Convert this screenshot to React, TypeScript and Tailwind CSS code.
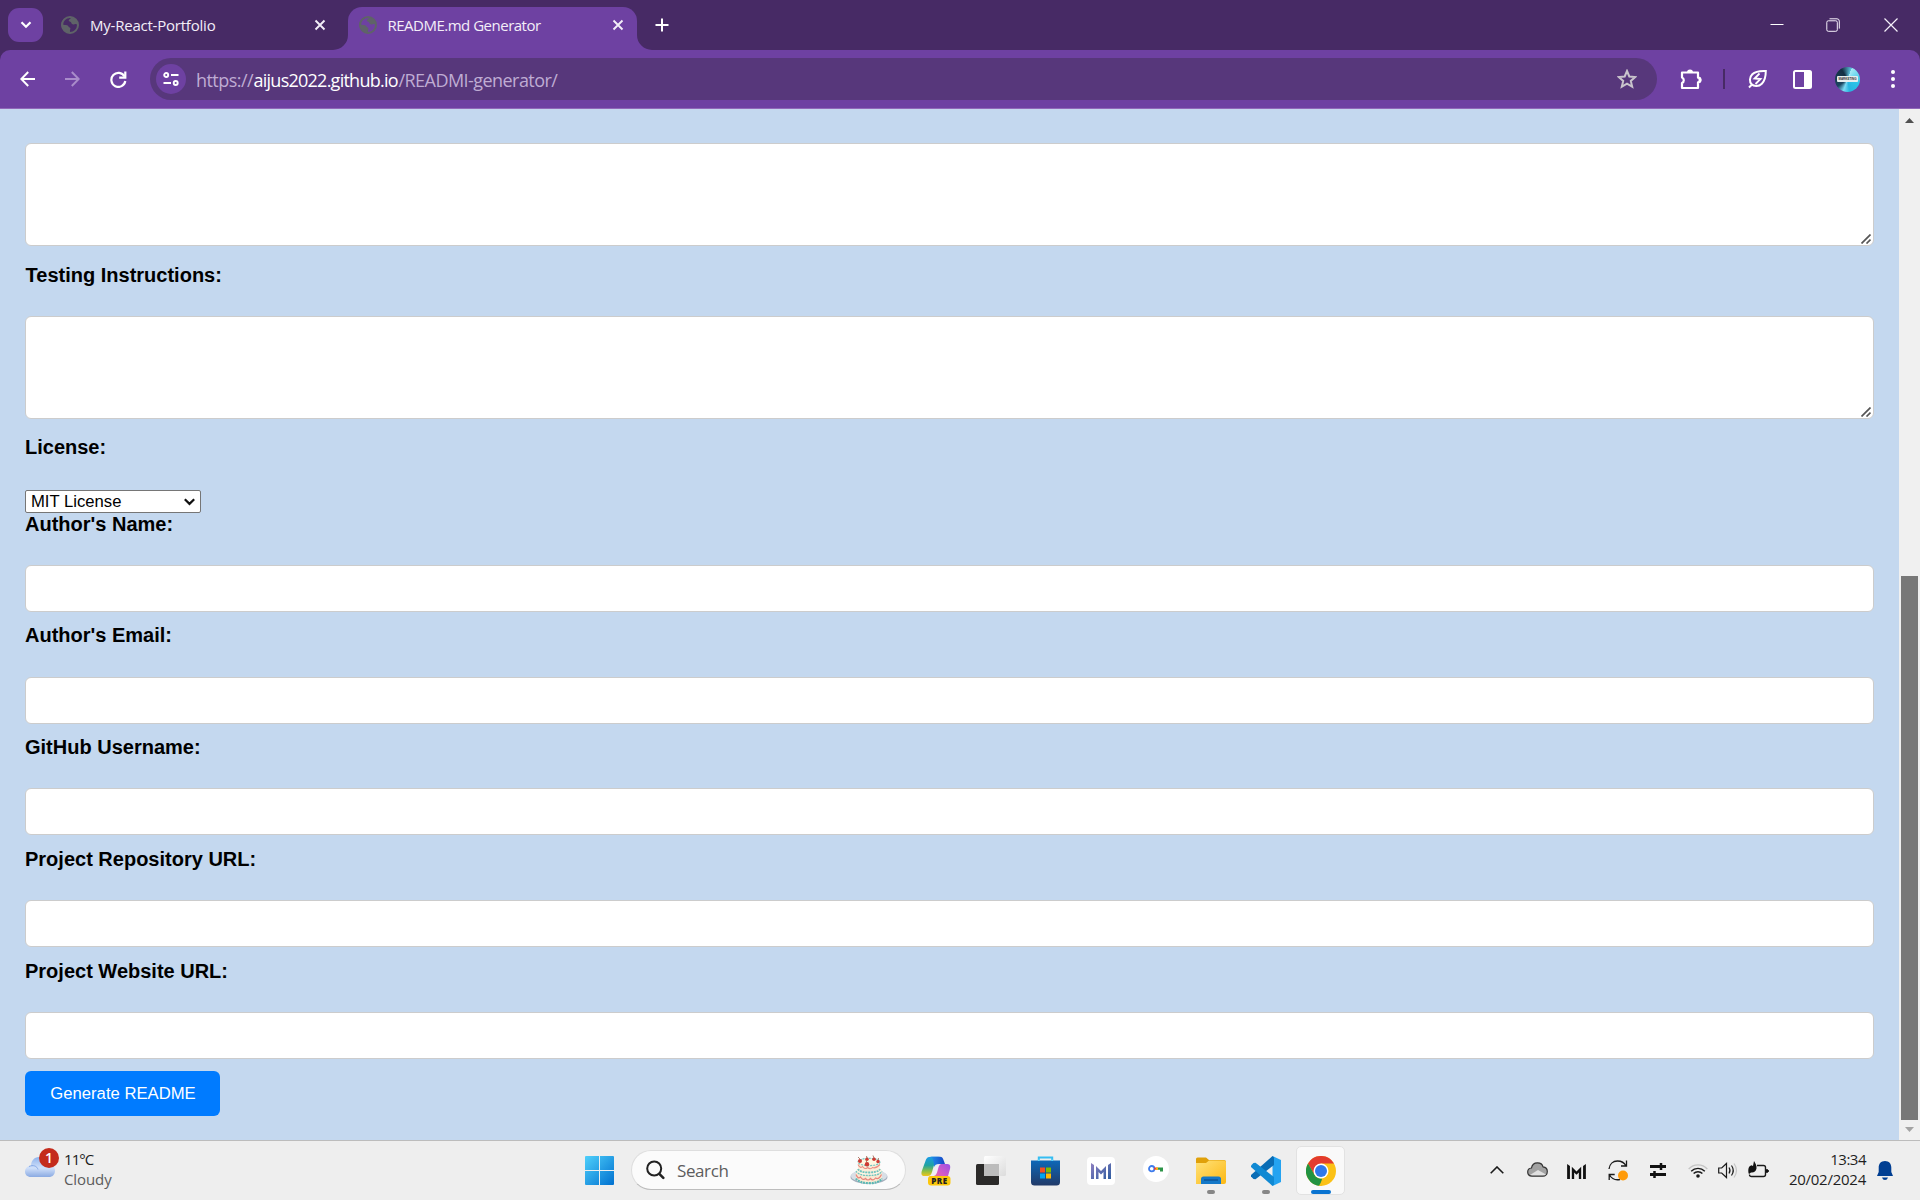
import React from "react";

const UI = "font-['Open_Sans',sans-serif]";

function Globe() {
  return (
    <svg width="18" height="18" viewBox="0 0 18 18" className="shrink-0">
      <circle cx="9" cy="9" r="8" fill="none" stroke="#5f6368" strokeWidth="2" />
      <path d="M8.500 1C6 1 2 3.500 1.500 8c1.500 1.300 3 .8 4.500 1.200 1.800.4 1.300 2 2.800 2.400 1 .3.600 1.700.200 2.600-.3 1 .2 2.200.8 2.800C4 17 .5 13 .5 9 .5 4 4 1 8.500 1z" fill="#5f6368" />
      <path d="M10.500 1.500c-.6 1.400-2.800 1.500-2.800 3.100 0 1.500 2.300.7 2.600 2.100.3 1.500 1.700 2 3.200 1.500 1.400-.5 2.800.2 3.500 1.300C17.500 5 14.500 2 10.500 1.500z" fill="#5f6368" />
    </svg>
  );
}

function Cross() {
  return (
    <svg width="12" height="12" viewBox="0 0 12 12" className="shrink-0" stroke="#f3eef8" strokeWidth="1.900">
      <path d="M1.500 1.500l9 9M10.500 1.500l-9 9" />
    </svg>
  );
}

function TabStrip() {
  return (
    <div className="flex h-[50px] w-full items-start bg-[#472a65]">
      <div className="ml-2 mt-2 flex h-[34px] w-[35px] items-center justify-center rounded-[11px] bg-[#6e41a2]">
        <svg width="12" height="8" viewBox="0 0 12 8" fill="none" stroke="#fff" strokeWidth="2.200"><path d="M1.500 1.200L6 5.700l4.500-4.500" /></svg>
      </div>
      <div className="ml-[18px] flex h-[50px] w-[287px] items-center">
        <Globe />
        <span className="ml-[11px] w-[213px] whitespace-nowrap text-[15px] tracking-[-0.22px] text-[#f3eef8]">My-React-Portfolio</span>
        <div className="ml-[11px] flex"><Cross /></div>
      </div>
      <div className="relative mt-[7px] flex h-[43px] w-[289px] items-center rounded-t-[14px] bg-[#6e41a2] pb-[7px] pl-[11px]">
        <svg width="15" height="15" viewBox="0 0 15 15" className="absolute -left-[15px] bottom-0"><path d="M15 0v15H0A15 15 0 0 0 15 0z" fill="#6e41a2" /></svg>
        <svg width="15" height="15" viewBox="0 0 15 15" className="absolute -right-[15px] bottom-0"><path d="M0 0v15h15A15 15 0 0 1 0 0z" fill="#6e41a2" /></svg>
        <Globe />
        <span className="ml-[10.500px] w-[213px] whitespace-nowrap text-[15px] tracking-[-0.5px] text-[#f3eef8]">README.md Generator</span>
        <div className="ml-[11px] flex"><Cross /></div>
      </div>
      <svg width="14" height="14" viewBox="0 0 14 14" className="ml-[18px] mt-[18px]" stroke="#fff" strokeWidth="2"><path d="M7 .5v13M.5 7h13" /></svg>
      <div className="ml-auto mr-[22px] mt-[17px] flex h-4 items-center">
        <svg width="14" height="14" viewBox="0 0 14 14"><path d="M.5 6.500h13" stroke="#fff" strokeWidth="1" /></svg>
        <svg width="14" height="14" viewBox="0 0 14 14" className="ml-[42px]" fill="none" stroke="#f5f0fa"><rect x=".8" y="2.800" width="10.500" height="10.500" rx="1.500" /><path d="M3.500.8h7.500a2.300 2.300 0 0 1 2.300 2.300v7.500" /></svg>
        <svg width="14" height="14" viewBox="0 0 14 14" className="ml-[44px]" stroke="#f5f0fa" strokeWidth="1.200"><path d="M.5.5l13 13M13.500.5l-13 13" /></svg>
      </div>
    </div>
  );
}

function Toolbar() {
  return (
    <div className="h-[59px] w-full bg-[#472a65]">
      <div className="flex h-[59px] items-center rounded-t-[10px] border-b border-[#9068b8] bg-[#6e41a2]">
        <svg width="16" height="16" viewBox="0 0 16 16" className="ml-5 shrink-0" fill="none" stroke="#fff" strokeWidth="2"><path d="M15 8H2M8.200 1L1.300 8l6.900 7" /></svg>
        <svg width="16" height="16" viewBox="0 0 16 16" className="ml-[28px] shrink-0" fill="none" stroke="#a98cca" strokeWidth="2"><path d="M1 8h13M7.800 1l6.900 7-6.900 7" /></svg>
        <svg width="17" height="17" viewBox="0 0 17 17" className="ml-[30px] shrink-0" fill="none" stroke="#fff" strokeWidth="2.200"><path d="M14.500 5.500A7 7 0 1 0 15.300 10" /><path d="M15.300.5v6.200H9.200" /></svg>
        <div className="ml-[23px] flex h-[42px] w-[1507px] shrink-0 items-center rounded-full bg-[#57377b]">
          <div className="ml-[6px] flex h-[30px] w-[30px] items-center justify-center rounded-full bg-[#6e41a2]">
            <svg width="16" height="14" viewBox="0 0 16 14" fill="none" stroke="#fff" strokeWidth="1.900"><circle cx="3.200" cy="3" r="2" /><path d="M8 3h7.500M.5 11h7.500" /><circle cx="12.700" cy="11" r="2" /></svg>
          </div>
          <div className="ml-[10px] mt-[1px] flex whitespace-nowrap text-[18px] leading-6 text-[#bfacd3]">
            <span className="w-[57.5px] tracking-[-0.55px]">https://</span>
            <span className="w-[145px] tracking-[-0.75px] text-white">aijus2022.github.io</span>
            <span className="tracking-[-0.55px]">/READMI-generator/</span>
          </div>
          <svg width="20" height="20" viewBox="0 0 20 20" className="ml-auto mr-5" fill="none" stroke="#c9c4cc" strokeWidth="2"><path d="M10 2l2.300 5.500 6 .5-4.500 3.900 1.400 5.900L10 14.700l-5.200 3.100 1.400-5.900L1.700 8l6-.5z" /></svg>
        </div>
        <svg width="22" height="22" viewBox="0 0 22 22" className="ml-[23px] shrink-0"><path d="M2 4.500h16v5.200a2.300 2.300 0 0 1 0 4.600v5.700H2v-5a3 3 0 0 0 0-5.500z" fill="none" stroke="#fff" strokeWidth="2.200" strokeLinejoin="round" /><path d="M7 4.500a3 3 0 0 1 6 0zM18.500 9a3 3 0 0 1 0 6z" fill="#fff" /></svg>
        <div className="ml-[21px] h-5 w-[2px] bg-[#472a65]" />
        <svg width="20" height="20" viewBox="0 0 20 20" className="ml-[23px] shrink-0" fill="none" stroke="#fff" strokeWidth="2"><path d="M17.800 2c-6-.3-10.500.3-13.500 3.300-3 3-3 7.500-.7 10s7.200 2.500 10.200-.5c3-3 4-7 4-12.800zM4 15.500l-3 3" /><path d="M11.500 4.500l-5 5 6 .5-5 5" strokeWidth="1.800" /></svg>
        <svg width="19" height="19" viewBox="0 0 19 19" className="ml-[25px] shrink-0"><rect x="1" y="1" width="17" height="17" rx="1.500" fill="none" stroke="#fff" strokeWidth="2" /><path d="M11 1h7v17h-7z" fill="#fff" /></svg>
        <div className="ml-[23px] flex h-[25px] w-[25px] shrink-0 items-center justify-center overflow-hidden rounded-full bg-[conic-gradient(from_20deg,#a5e9f5,#2cc3e8_90deg,#27b5e0_150deg,#7bdcf5_180deg,#1b4560_215deg,#142f42_310deg,#5cc5e0)]">
          <div className="flex h-[6px] w-[21px] items-center justify-center rounded-[1px] bg-[#e6eeee] font-['Liberation_Sans',sans-serif] text-[3px] font-bold leading-none text-[#333]">MARKETING</div>
        </div>
        <svg width="4" height="18" viewBox="0 0 4 18" className="ml-[31px] shrink-0" fill="#fff"><circle cx="2" cy="2" r="2" /><circle cx="2" cy="9" r="2" /><circle cx="2" cy="16" r="2" /></svg>
      </div>
    </div>
  );
}

function Area() {
  return (
    <div className="relative h-[103px] w-[1849px] rounded-[6px] border border-[#ccc] bg-white">
      <svg width="10" height="10" viewBox="0 0 10 10" className="absolute bottom-[1px] right-[2px]" stroke="#555" strokeWidth="1.700"><path d="M.5 9.500l9-9M5.500 9.500l4-4" /></svg>
    </div>
  );
}

function Label({ className, children }: { className: string; children: string }) {
  return <div className={"h-[23px] whitespace-nowrap text-[20px] font-bold leading-[23px] text-black " + className}>{children}</div>;
}

function Box() {
  return <div className="h-[47px] w-[1849px] rounded-[6px] border border-[#ccc] bg-white" />;
}

function Form() {
  return (
    <div className="flex h-[1031px] w-full bg-[#c4d8ef]">
      <div className="flex w-[1899px] flex-col items-start pl-[25px] pt-[34px] font-['Liberation_Sans',Arial,sans-serif]">
        <Area />
        <Label className="mb-[29px] mt-[18px] pl-[0.6px]">Testing Instructions:</Label>
        <Area />
        <Label className="mb-[31px] mt-[17px]">License:</Label>
        <div className="flex h-[23px] w-[176px] items-center justify-between rounded-[2px] border border-[#767676] bg-white pl-[5px] pr-[5px] text-[16.667px] leading-[21px] text-black">
          <span>MIT License</span>
          <svg width="11" height="8" viewBox="0 0 11 8" fill="none" stroke="#111" strokeWidth="2.200"><path d="M.8 1.200l4.700 4.700 4.700-4.700" /></svg>
        </div>
        <Label className="mb-[29px]">Author's Name:</Label>
        <Box />
        <Label className="mb-[30px] mt-[12px]">Author's Email:</Label>
        <Box />
        <Label className="mb-[29px] mt-[12px]">GitHub Username:</Label>
        <Box />
        <Label className="mb-[29px] mt-[13px]">Project Repository URL:</Label>
        <Box />
        <Label className="mb-[29px] mt-[13px]">Project Website URL:</Label>
        <Box />
        <div className="mt-[12px] flex h-[45px] w-[195px] items-center justify-center whitespace-nowrap rounded-[6px] bg-[#007bff] pl-[1px] text-[16.667px] text-white">Generate README</div>
      </div>
      <div className="flex w-[21px] flex-col items-center bg-[#f0f0f0] pt-[9px]">
        <svg width="9" height="5" viewBox="0 0 9 5"><path d="M4.500 0L9 5H0z" fill="#505050" /></svg>
        <div className="mt-[453px] h-[544px] w-[17px] bg-[#787878]" />
        <svg width="9" height="5" viewBox="0 0 9 5" className="mt-[7px]"><path d="M0 0h9L4.500 5z" fill="#a3a3a3" /></svg>
      </div>
    </div>
  );
}

function Slot({ children, mark }: { children: React.ReactNode; mark?: boolean }) {
  return (
    <div className="relative flex h-[59px] w-[55px] shrink-0 items-center justify-center">
      {children}
      {mark && <div className="absolute bottom-[6px] h-1 w-2 rounded-full bg-[#868686]" />}
    </div>
  );
}

function Cake() {
  return (
    <svg width="38" height="31" viewBox="0 0 38 31">
      <ellipse cx="19" cy="22" rx="18.500" ry="7" fill="#a5afbd" />
      <ellipse cx="19" cy="21" rx="18" ry="6.500" fill="#d9dfe6" />
      <path d="M6 16v7c0 3 6 5.500 13 5.500S32 26 32 23v-7z" fill="#f8ead3" />
      <ellipse cx="19" cy="16" rx="13" ry="4.500" fill="#fff5e3" />
      <path d="M6 23.500c2 3 7 4.700 13 4.700s11-1.700 13-4.700" fill="none" stroke="#58b8b5" strokeWidth="2.200" strokeDasharray="2 .8" />
      <path d="M6 16c1.500 3 6 4.500 13 4.500S30.500 19 32 16" fill="none" stroke="#6fc4bf" strokeWidth="1.300" strokeDasharray="2 .8" />
      <path d="M6 19.500q2 5 4.500 2.500 2.500 4 5 1.500 2.500 3 5 0 2.500 3 5-.5 3.500 2 6-3.500" fill="none" stroke="#e9847b" strokeWidth="1.200" />
      <path d="M8 7v7c0 2.500 5 4 11 4s11-1.500 11-4V7z" fill="#fbeed9" />
      <path d="M8 14c1 2.500 6 3.500 11 3.500S29 16.500 30 14" fill="none" stroke="#6fc4bf" strokeWidth="1.800" strokeDasharray="2 .8" />
      <path d="M8 9.500q2.500 4.500 4.500 2 2.500 3.500 5 1 3 2.500 5 0 3 1.500 7.500-3" fill="none" stroke="#eb8f83" strokeWidth="1.100" />
      <ellipse cx="19" cy="7" rx="11" ry="3.600" fill="#fff6e0" stroke="#6fc4bf" strokeWidth="1.200" strokeDasharray="2 1" />
      <g fill="#cf3a33"><circle cx="10" cy="6" r="2" /><circle cx="17" cy="4.200" r="1.700" /><circle cx="24" cy="4.200" r="1.800" /><circle cx="28" cy="6.500" r="1.700" /><circle cx="17" cy="9.300" r="2.200" /></g>
      <path d="M10 4L8 2M17 3l-.5-2M24 3l-1-2.500M28 5l.5-2M17 7.500l-1-2" stroke="#8c4a2f" strokeWidth=".7" />
    </svg>
  );
}

function Copilot() {
  return (
    <svg width="30" height="30" viewBox="0 0 30 30">
      <defs>
        <linearGradient id="ca" x1="0" y1="0" x2="0" y2="1"><stop offset="0" stopColor="#1a9be8" /><stop offset=".45" stopColor="#21a3a0" /><stop offset=".75" stopColor="#8fc043" /><stop offset="1" stopColor="#f0c419" /></linearGradient>
        <linearGradient id="cb" x1="1" y1="0" x2="0" y2="1"><stop offset="0" stopColor="#9a4fe6" /><stop offset=".5" stopColor="#d65bc4" /><stop offset="1" stopColor="#fb7f5c" /></linearGradient>
        <linearGradient id="cc" x1="0" y1="0" x2="1" y2="0"><stop offset="0" stopColor="#1f8ee8" /><stop offset="1" stopColor="#1644c6" /></linearGradient>
      </defs>
      <path d="M5 3.500C6 1.500 7.500.8 10 .8h9c-3 0-4 2-5 5L11 16c-1 3-2 4-4.500 4H3.500C.5 20 0 18 .8 15z" fill="url(#ca)" />
      <path d="M10 .8h9c2.300 0 3 1.500 3.700 3.700L24 8h-6c-3 0-4 1-5 3 0-4-1-9-3-10.200z" fill="url(#cc)" />
      <path d="M18 8h8.500c3 0 3 3 2.500 5l-2 7c-1 3-2 5-5 5h-9c-3 0-4-2-4.500-5 3 1 5 0 6-4l2-6z" fill="url(#cb)" />
      <path d="M18.500 8C14 8 14 19 9 20h3.500c5 0 3.500-11 7.500-12z" fill="#f2edf5" />
      <rect x="7" y="20" width="22.500" height="9.500" rx="3" fill="#fdc70a" />
      <text x="18.500" y="27.700" textAnchor="middle" fontFamily="Open Sans, sans-serif" fontWeight="800" fontSize="8" letterSpacing=".6" fill="#222">PRE</text>
    </svg>
  );
}

const M_SHAPE = "M0 0l3 2v14H0zM5 3l5 5 5-5v13h-2.500V9L10 11.500 7.500 9v7H5zM20 0v16h-3V2z";

function Taskbar() {
  return (
    <div className={"flex h-[60px] w-full border-t border-[#bcbcbc] bg-[#eeeeee] " + UI}>
      <div className="flex w-[585px]">
        <div className="relative ml-[25px] mt-[6px] h-[32px] w-[35px]">
          <svg width="30" height="20" viewBox="0 0 30 20" className="absolute left-0 top-[10px]">
            <defs><linearGradient id="cl" x1="0" y1="0" x2="0" y2="1"><stop offset="0" stopColor="#8fb3ec" /><stop offset=".55" stopColor="#d0e0fa" /><stop offset="1" stopColor="#8aaae2" /></linearGradient></defs>
            <path d="M6 9C6 4 9 0 14 0c5 0 8 3 8.500 7C27 7 30 9 30 13.500S27 20 24 20H6c-4 0-6-2.500-6-5.500S2 9 6 9z" fill="url(#cl)" />
            <path d="M4 9.500c4-2 8-.5 9 3" fill="none" stroke="#86a9e6" strokeWidth="1" />
          </svg>
          <div className="absolute left-[14px] top-[1px] flex h-[20px] w-[20px] items-center justify-center rounded-full bg-[#c42b1c] text-[14px] font-semibold leading-none text-white">1</div>
        </div>
        <div className="ml-[4px] mt-[8px] whitespace-nowrap text-[15px] leading-5">
          <div className="tracking-[-0.95px] text-[#1c1c1c]">11°C</div>
          <div className="tracking-[-0.1px] text-[#5c5c5c]">Cloudy</div>
        </div>
      </div>
      <svg width="29" height="29" viewBox="0 0 29 29" className="mt-[15px] shrink-0">
        <defs><linearGradient id="wn" x1="0" y1="0" x2="1" y2="1"><stop offset="0" stopColor="#4fd0fb" /><stop offset="1" stopColor="#0070cf" /></linearGradient></defs>
        <path d="M0 1q0-1 1-1h13v14H0zM15 0h13q1 0 1 1v13H15zM0 15h14v14H1q-1 0-1-1zM15 15h14v13q0 1-1 1H15z" fill="url(#wn)" />
      </svg>
      <div className="ml-[17px] mt-[9px] flex h-[40px] w-[275px] shrink-0 items-center rounded-full border border-[#dedede] border-b-[#bdbdbd] bg-[#fbfbfb]">
        <svg width="19" height="20" viewBox="0 0 19 20" className="ml-[14px]" fill="none" stroke="#222" strokeLinecap="round"><circle cx="8.200" cy="8.500" r="7" strokeWidth="2" /><path d="M13.300 13.800l4 4" strokeWidth="2.600" /></svg>
        <span className="ml-[12px] pt-[1px] text-[17px] tracking-[-0.4px] text-[#5d5d5d]">Search</span>
        <div className="ml-auto mr-[17px]"><Cake /></div>
      </div>
      <div className="ml-[2px] flex">
        <Slot><Copilot /></Slot>
        <Slot>
          <svg width="30" height="30" viewBox="0 0 30 30"><defs><linearGradient id="tv" x1="0" y1="0" x2="1" y2="1"><stop offset="0" stopColor="#fff" /><stop offset="1" stopColor="#dcdcdc" /></linearGradient></defs><rect x="0" y="8" width="23" height="21" rx="1.500" fill="#2b2a29" /><rect x="8" y="0" width="22" height="20" rx="1.500" fill="url(#tv)" /><path d="M8 8h15v12H8z" fill="#bcbcbc" /></svg>
        </Slot>
        <Slot>
          <svg width="29" height="30" viewBox="0 0 29 30"><defs><linearGradient id="st" x1="0" y1="0" x2="0" y2="1"><stop offset="0" stopColor="#0d68b8" /><stop offset="1" stopColor="#213a68" /></linearGradient></defs><path d="M7.800 6V1.500h13.400V6" fill="none" stroke="#35bdf2" strokeWidth="2" /><path d="M0 4.500h29V26q0 3.500-3.500 3.500h-22Q0 29.500 0 26z" fill="url(#st)" /><path d="M7.800 5V3.500M21.200 5V3.500" stroke="#5fd6fb" strokeWidth="2" /><path fill="#f25022" d="M9 11.500h5v5H9z" /><path fill="#7fba00" d="M15 11.500h5v5h-5z" /><path fill="#00a4ef" d="M9 17.500h5v5H9z" /><path fill="#ffb900" d="M15 17.500h5v5h-5z" /></svg>
        </Slot>
        <Slot>
          <div className="flex h-[28px] w-[28px] items-center justify-center rounded-[4px] bg-white">
            <svg width="20" height="16" viewBox="0 0 20 16"><defs><linearGradient id="mm" x1="0" y1="0" x2="1" y2="1"><stop offset="0" stopColor="#8e7fc0" /><stop offset="1" stopColor="#2d5ca0" /></linearGradient></defs><path d={M_SHAPE} fill="url(#mm)" /></svg>
          </div>
        </Slot>
        <Slot>
          <div className="mb-[3px] flex h-[26px] w-[26px] items-center justify-center rounded-full bg-white">
            <svg width="15" height="8" viewBox="0 0 15 8"><circle cx="3.700" cy="3.700" r="2.700" fill="none" stroke="#3f7cec" strokeWidth="1.800" /><path d="M6 2.500h4v2.200H6z" fill="#ea4335" /><path d="M8 2.500h2v2.200H8z" fill="#fbbc04" /><path d="M10 2.500h5v4h-3V4.700h-2z" fill="#2c9447" /></svg>
          </div>
        </Slot>
        <Slot mark>
          <svg width="30" height="28" viewBox="0 0 30 28"><defs><linearGradient id="fo" x1="0" y1="0" x2="1" y2="1"><stop offset="0" stopColor="#ffe27a" /><stop offset="1" stopColor="#fcb813" /></linearGradient></defs><path d="M0 2q0-1.500 1.500-1.500H10L13 3h15q2 0 2 2v5H0z" fill="#e0a009" /><path d="M0 6h10l3-2.500h15q2 0 2 2V25q0 2-2 2H0z" fill="url(#fo)" /><path d="M5 27v-5q0-2.500 2.500-2.500h15Q25 19.500 25 22v5z" fill="#1478c8" /><path d="M8 23h14" stroke="#0a4b8c" strokeWidth="1.200" /></svg>
        </Slot>
        <Slot mark>
          <svg width="30" height="30" viewBox="0 0 30 30"><path d="M21.500 0L30 4v22l-8.500 4z" fill="#24a3f1" /><path d="M21.500 0L23 1.500V9L4.500 23.300 2.500 23 0 20.500V19z" fill="#0a6db5" /><path d="M0 9.500L2.500 7l2-.3L23 21v7.500L21.500 30 0 11z" fill="#1089d3" /></svg>
        </Slot>
        <Slot>
          <div className="relative flex h-[49px] w-[49px] items-center justify-center rounded-[5px] border border-[#e2e2e2] bg-[#f9f9f9]">
            <svg width="30" height="30" viewBox="0 0 30 30">
              <circle cx="15" cy="15" r="15" fill="#fbc116" />
              <path d="M2 7.500a15 15 0 0 1 26 0H15L8.500 18.750z" fill="#e33b2e" />
              <path d="M2 7.500L8.500 18.750a7.500 7.500 0 0 0 7.500 3.700L15 30A15 15 0 0 1 2 7.500z" fill="#229342" />
              <path d="M21.500 18.750L15 30l-2-.1 4-7.700z" fill="#fbc116" />
              <circle cx="15" cy="15" r="7.500" fill="#fff" /><circle cx="15" cy="15" r="6" fill="#2f78ea" />
            </svg>
            <div className="absolute bottom-0 h-1 w-5 rounded-full bg-[#0a74d1]" />
          </div>
        </Slot>
      </div>
      <div className="ml-auto flex h-[59px] items-center pr-[27px]">
        <svg width="14" height="8" viewBox="0 0 14 8" className="mb-[1px]" fill="none" stroke="#1a1a1a" strokeWidth="1.600"><path d="M.7 7.300L7 1l6.300 6.300" /></svg>
        <svg width="21" height="15" viewBox="0 0 21 15" className="mb-[2px] ml-[23px]"><path d="M4.500 6C5 2.500 7.500.8 10.500.8c3 0 5 1.700 5.500 4 2.700.3 4.300 2 4.300 4.600 0 2.700-1.800 4.800-4.300 4.800H5c-2.500 0-4.300-1.800-4.300-4.200C.7 7.700 2.300 6.200 4.500 6z" fill="#a2a2a2" /><path d="M3 13l8-5 8 4.500-3 1.500H5z" fill="#e0e0e0" /><path d="M4.500 6C5 2.500 7.500.8 10.500.8c3 0 5 1.700 5.500 4 2.700.3 4.300 2 4.300 4.600 0 2.700-1.800 4.800-4.300 4.800H5c-2.500 0-4.300-1.800-4.300-4.200C.7 7.700 2.300 6.200 4.500 6z" fill="none" stroke="#333" strokeWidth="1.200" /></svg>
        <svg width="19" height="15" viewBox="0 0 20 16" className="ml-[19px] mt-[2px]"><path d={M_SHAPE} fill="#111" /></svg>
        <svg width="21" height="21" viewBox="0 0 21 21" className="ml-[22px]" fill="none" stroke="#1a1a1a" strokeWidth="1.300"><path d="M1 9C1.500 4 5 1 9.500 1c4 0 7 2 8.500 5M18.500.5V6h-5.500M12 19.500C7 20.500 3.500 18.500 1.500 15M1.200 20v-5.500h5.500" /><circle cx="15" cy="15.500" r="5" fill="#ff9b0a" stroke="none" /></svg>
        <svg width="18" height="15" viewBox="0 0 18 15" className="ml-[20px]"><path d="M1 3.500h16M1 11.500h16" stroke="#111" strokeWidth="3" /><path d="M12 0v7M5.500 8v7" stroke="#111" strokeWidth="2.500" /></svg>
        <svg width="20" height="15" viewBox="0 0 20 15" className="ml-[21px]" fill="none" strokeWidth="1.400"><path d="M.7 6a12.500 12.500 0 0 1 18.600 0" stroke="#c5c5c5" /><path d="M3.200 8.200a9.500 9.500 0 0 1 13.600 0M5.600 10.600a6.200 6.200 0 0 1 8.800 0" stroke="#1a1a1a" /><circle cx="10" cy="13" r="1.800" fill="#1a1a1a" /></svg>
        <svg width="20" height="17" viewBox="0 0 20 17" className="ml-[10px]" fill="none" stroke="#1a1a1a" strokeWidth="1.200"><path d="M.7 6h3L8.500 1.500v14L3.700 11h-3z" /><path d="M11 5.500q2 3 0 6M13.500 3.500q3.500 5 0 10" /><path d="M16 1.500q5 7 0 14" stroke="#c5c5c5" /></svg>
        <svg width="21" height="17" viewBox="0 0 21 17" className="-mt-[3px] ml-[10px]"><path d="M9 4.500h6.500q2 0 2 2v7q0 2-2 2h-12q-2 0-2-2" fill="none" stroke="#1a1a1a" strokeWidth="1.400" /><path d="M18.500 8.500q2 .2 2 1.500t-2 1.500z" fill="#111" stroke="#111" /><path d="M6 0C7 2 9 4 8.500 7.500 8 10.500 5.500 12 3 11.500L1 13l-.5-1C0 8 .5 5 3.500 4.200L5 5z" fill="#111" /></svg>
        <div className="-mt-[3px] ml-[9px] w-[88px] whitespace-nowrap text-right text-[15px] leading-5 text-[#1f1f1f]">
          <div className="tracking-[-0.5px]">13:34</div>
          <div className="tracking-[-0.25px]">20/02/2024</div>
        </div>
        <svg width="16" height="19" viewBox="0 0 16 19" className="ml-[11px]" fill="#003e92"><path d="M8 0c4 0 6.300 2.800 6.300 6.500V11L16 15H0l1.700-4V6.500C1.700 2.800 4 0 8 0zM5 16.500h6q-.8 2.500-3 2.500t-3-2.500z" /></svg>
      </div>
    </div>
  );
}

export default function App() {
  return (
    <div className={"flex h-[1200px] w-[1920px] flex-col overflow-hidden " + UI}>
      <TabStrip />
      <Toolbar />
      <Form />
      <Taskbar />
    </div>
  );
}
